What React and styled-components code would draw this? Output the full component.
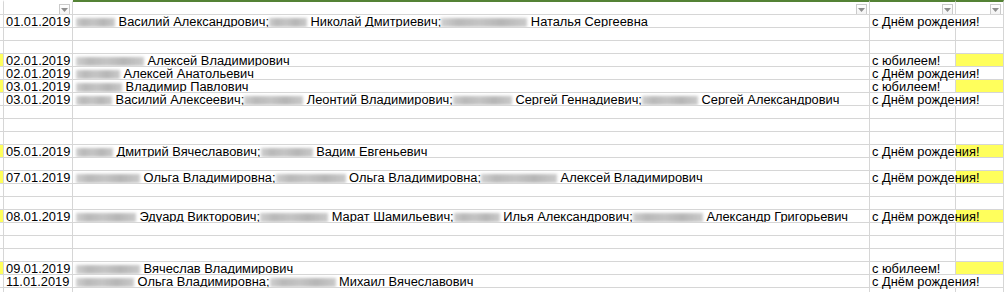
import React from 'react';
import styled, { createGlobalStyle } from 'styled-components';

const GRID = '#d6d6d6';
const YELLOW = '#ffff5c';
const GREEN = '#548235';

const GlobalStyle = createGlobalStyle`
  html, body { margin: 0; padding: 0; overflow: hidden; background: #fff; }
  * { box-sizing: border-box; }
`;

const Sheet = styled.div`
  display: grid;
  grid-template-columns: 4px 69px 797px 86px 48px;
  grid-template-rows: 15px;
  grid-auto-rows: 13px;
  width: 1004px;
  font-family: 'Liberation Sans', Arial, sans-serif;
  font-size: 12.85px;
  color: #000;
`;

const HeaderCell = styled.div`
  display: flex;
  justify-content: flex-end;
  align-items: flex-end;
  padding-right: 2px;
  border-top: 2px solid ${p => (p.$green ? GREEN : 'transparent')};
  border-right: 1px solid ${GRID};
  border-bottom: 1px solid ${GRID};
`;

const FilterBox = styled.div`
  width: 11px;
  height: 10px;
  border: 1px solid #cbcbcb;
  border-bottom: none;
  background: linear-gradient(#ffffff, #f3f3f3);
  display: flex;
  align-items: center;
  justify-content: center;
`;

const Cell = styled.div`
  position: relative;
  z-index: ${p => (p.$over ? 1 : 0)};
  background: ${p => (p.$bg ? p.$bg : 'transparent')};
  border-right: 1px solid ${p => (p.$noRight ? 'transparent' : GRID)};
  border-bottom: 1px solid ${GRID};
  padding-left: ${p => p.$pad || 0}px;
  white-space: nowrap;
  overflow: ${p => (p.$over ? 'visible' : 'hidden')};
  line-height: 13px;
`;

const Blur = styled.span`
  display: inline-block;
  width: ${p => p.$w}px;
  height: 9px;
  vertical-align: -1px;
  background: linear-gradient(90deg, #c4c4c4, #a8a8a8 20%, #b6b6b6 45%, #a4a4a4 70%, #bdbdbd);
  filter: blur(1.5px);
  opacity: 0.8;
`;

const Filter = () => (
  <FilterBox>
    <svg width="7" height="4" viewBox="0 0 7 4">
      <path d="M0 0 H7 L3.5 4 Z" fill="#8f8f8f" />
    </svg>
  </FilterBox>
);

const BD = 'с Днём рождения!';
const JUB = 'с юбилеем!';

const rows = [
  { date: '01.01.2019', names: [[39], ' Василий Александрович;', [38], ' Николай Дмитриевич;', [86], ' Наталья Сергеевна'], greet: BD },
  {},
  {},
  { date: '02.01.2019', mark: true, names: [[68], ' Алексей Владимирович'], greet: JUB },
  { date: '02.01.2019', names: [[44], ' Алексей Анатольевич'], greet: BD },
  { date: '03.01.2019', mark: true, names: [[46], ' Владимир Павлович'], greet: JUB },
  { date: '03.01.2019', names: [[36], ' Василий Алексеевич;', [59], ' Леонтий Владимирович;', [59], ' Сергей Геннадиевич;', [56], ' Сергей Александрович'], greet: BD },
  {},
  {},
  {},
  { date: '05.01.2019', mark: true, names: [[37], ' Дмитрий Вячеславович;', [52], ' Вадим Евгеньевич'], greet: BD },
  {},
  { date: '07.01.2019', mark: true, names: [[64], ' Ольга Владимировна;', [70], ' Ольга Владимировна;', [76], ' Алексей Владимирович'], greet: BD },
  {},
  {},
  { date: '08.01.2019', mark: true, names: [[60], ' Эдуард Викторович;', [68], ' Марат Шамильевич;', [46], ' Илья Александрович;', [70], ' Александр Григорьевич'], greet: BD },
  {},
  {},
  {},
  { date: '09.01.2019', mark: true, names: [[64], ' Вячеслав Владимирович'], greet: JUB },
  { date: '11.01.2019', names: [[58], ' Ольга Владимировна;', [66], ' Михаил Вячеславович'], greet: BD },
  {},
];

const Names = ({ parts }) => (
  <>
    {parts.map((p, i) =>
      Array.isArray(p) ? <Blur key={i} $w={p[0]} /> : <span key={i}>{p}</span>
    )}
  </>
);

export default function App() {
  return (
    <>
      <GlobalStyle />
      <Sheet>
        <HeaderCell />
        <HeaderCell><Filter /></HeaderCell>
        <HeaderCell $green><Filter /></HeaderCell>
        <HeaderCell $green><Filter /></HeaderCell>
        <HeaderCell $green><Filter /></HeaderCell>
        {rows.map((r, i) => {
          const over = r.greet === BD;
          return (
            <React.Fragment key={i}>
              <Cell $bg={r.mark ? YELLOW : null} />
              <Cell $pad={2}>{r.date}</Cell>
              <Cell $pad={3}>{r.names && <Names parts={r.names} />}</Cell>
              <Cell $pad={2} $over={over} $noRight={over}>{r.greet}</Cell>
              <Cell $bg={r.mark ? YELLOW : null} />
            </React.Fragment>
          );
        })}
      </Sheet>
    </>
  );
}
